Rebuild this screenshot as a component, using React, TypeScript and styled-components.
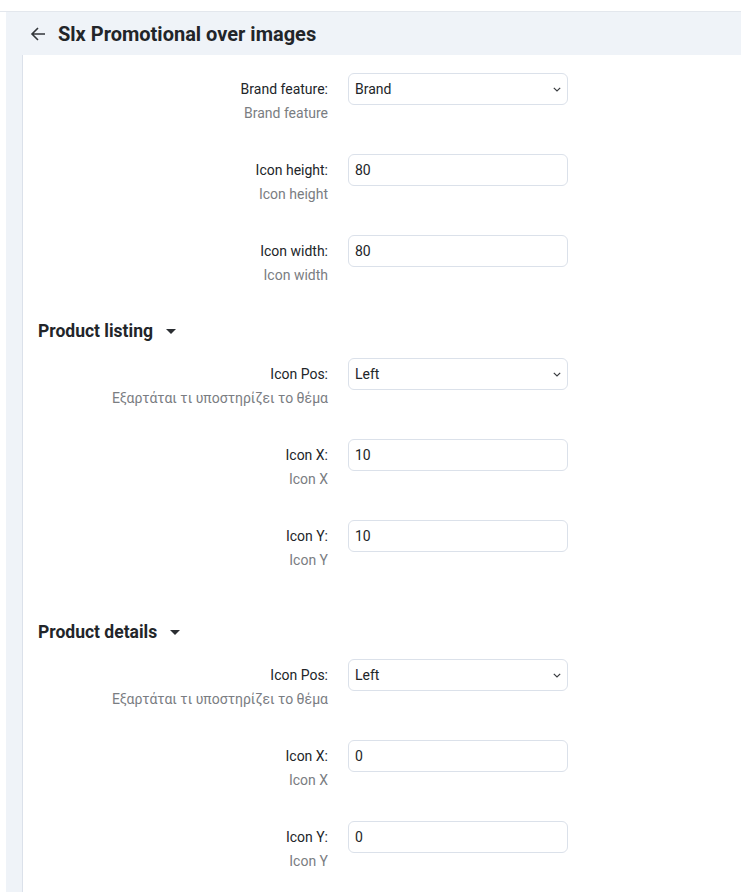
import React from "react";
import styled, { createGlobalStyle } from "styled-components";

const COLORS = {
  text: "#222529",
  hint: "#7a7d82",
  headerBg: "#eff3f8",
  border: "#dbe1ea",
  topLine: "#e3e7ed",
};

const GlobalStyle = createGlobalStyle`
  html, body {
    margin: 0;
    padding: 0;
    background: #ffffff;
  }
  body {
    font-family: Roboto, "Noto Sans", "Liberation Sans", sans-serif;
    color: ${COLORS.text};
  }
  * {
    box-sizing: border-box;
  }
`;

const TopStrip = styled.div`
  height: 12px;
  border-bottom: 1px solid ${COLORS.topLine};
  background: #ffffff;
`;

const Main = styled.div`
  margin-left: 6px;
  background: ${COLORS.headerBg};
  min-height: 880px;
`;

const Header = styled.div`
  display: flex;
  align-items: center;
  gap: 11px;
  height: 43px;
  padding-left: 23px;
`;

const BackButton = styled.button`
  display: flex;
  align-items: center;
  justify-content: center;
  width: 18px;
  height: 18px;
  padding: 0;
  border: 0;
  background: transparent;
  color: #33363a;
  cursor: pointer;
`;

const Title = styled.h1`
  margin: 0;
  font-size: 20px;
  font-weight: 700;
  line-height: 24px;
  color: ${COLORS.text};
`;

const Panel = styled.div`
  margin-left: 16px;
  min-height: 837px;
  background: #ffffff;
  border-left: 1px solid ${COLORS.border};
  padding: 18px 0 0 15px;
`;

// spacing above a group, on top of the last row's bottom margin
const Section = styled.section<{ $space?: number }>`
  padding-top: ${(p) => p.$space ?? 0}px;
`;

const SectionTitle = styled.h2`
  display: flex;
  align-items: center;
  gap: 13px;
  margin: 0 0 15px;
  font-size: 17.5px;
  font-weight: 700;
  line-height: 24px;
  color: ${COLORS.text};
`;

const Caret = styled.span`
  width: 0;
  height: 0;
  border-left: 5px solid transparent;
  border-right: 5px solid transparent;
  border-top: 5px solid #2b2e32;
`;

const Row = styled.div`
  display: grid;
  grid-template-columns: 290px 220px;
  column-gap: 20px;
  align-items: start;
  margin-bottom: 31px;
`;

const LabelCol = styled.div`
  display: flex;
  flex-direction: column;
  align-items: flex-end;
  gap: 4px;
  padding-top: 6px;
  text-align: right;
`;

const Label = styled.label`
  font-size: 14px;
  line-height: 20px;
  color: ${COLORS.text};
`;

const Hint = styled.div`
  font-size: 14px;
  line-height: 20px;
  color: ${COLORS.hint};
`;

const Control = styled.div`
  position: relative;
  width: 220px;
  height: 32px;
`;

const TextInput = styled.input`
  width: 100%;
  height: 32px;
  padding: 0 6px;
  border: 1px solid ${COLORS.border};
  border-radius: 6px;
  font-family: inherit;
  font-size: 14px;
  color: ${COLORS.text};
  background: #ffffff;
  outline: none;
`;

const Select = styled.select`
  width: 100%;
  height: 32px;
  padding: 0 26px 0 6px;
  border: 1px solid ${COLORS.border};
  border-radius: 6px;
  font-family: inherit;
  font-size: 14px;
  color: ${COLORS.text};
  background: #ffffff;
  appearance: none;
  outline: none;
`;

const Chevron = styled.svg`
  position: absolute;
  right: 7px;
  top: 14px;
  pointer-events: none;
`;

type Field = {
  label: string;
  hint: string;
  value: string;
  options?: string[];
};

const FieldRow = ({ label, hint, value, options }: Field) => (
  <Row>
    <LabelCol>
      <Label>{label}:</Label>
      <Hint>{hint}</Hint>
    </LabelCol>
    <Control>
      {options ? (
        <>
          <Select defaultValue={value}>
            {options.map((o) => (
              <option key={o}>{o}</option>
            ))}
          </Select>
          <Chevron width="8" height="5" viewBox="0 0 8 5">
            <path d="M0.8 0.8 L4 4 L7.2 0.8" fill="none" stroke="#3a3d41" strokeWidth="1.2" />
          </Chevron>
        </>
      ) : (
        <TextInput defaultValue={value} />
      )}
    </Control>
  </Row>
);

const POS_HINT = "Εξαρτάται τι υποστηρίζει το θέμα";

const general: Field[] = [
  { label: "Brand feature", hint: "Brand feature", value: "Brand", options: ["Brand", "Feature"] },
  { label: "Icon height", hint: "Icon height", value: "80" },
  { label: "Icon width", hint: "Icon width", value: "80" },
];

const listing: Field[] = [
  { label: "Icon Pos", hint: POS_HINT, value: "Left", options: ["Left", "Right"] },
  { label: "Icon X", hint: "Icon X", value: "10" },
  { label: "Icon Y", hint: "Icon Y", value: "10" },
];

const details: Field[] = [
  { label: "Icon Pos", hint: POS_HINT, value: "Left", options: ["Left", "Right"] },
  { label: "Icon X", hint: "Icon X", value: "0" },
  { label: "Icon Y", hint: "Icon Y", value: "0" },
];

export default function App() {
  return (
    <>
      <GlobalStyle />
      <TopStrip />
      <Main>
        <Header>
          <BackButton aria-label="Back">
            <svg width="16" height="16" viewBox="0 0 16 16">
              <path
                d="M15 8 H2 M8 2 L2 8 L8 14"
                fill="none"
                stroke="currentColor"
                strokeWidth="1.6"
              />
            </svg>
          </BackButton>
          <Title>Slx Promotional over images</Title>
        </Header>
        <Panel>
          <Section>
            {general.map((f) => (
              <FieldRow key={f.label} {...f} />
            ))}
          </Section>
          <Section $space={3}>
            <SectionTitle>
              Product listing <Caret />
            </SectionTitle>
            {listing.map((f) => (
              <FieldRow key={f.label} {...f} />
            ))}
          </Section>
          <Section $space={19}>
            <SectionTitle>
              Product details <Caret />
            </SectionTitle>
            {details.map((f) => (
              <FieldRow key={f.label} {...f} />
            ))}
          </Section>
        </Panel>
      </Main>
    </>
  );
}
